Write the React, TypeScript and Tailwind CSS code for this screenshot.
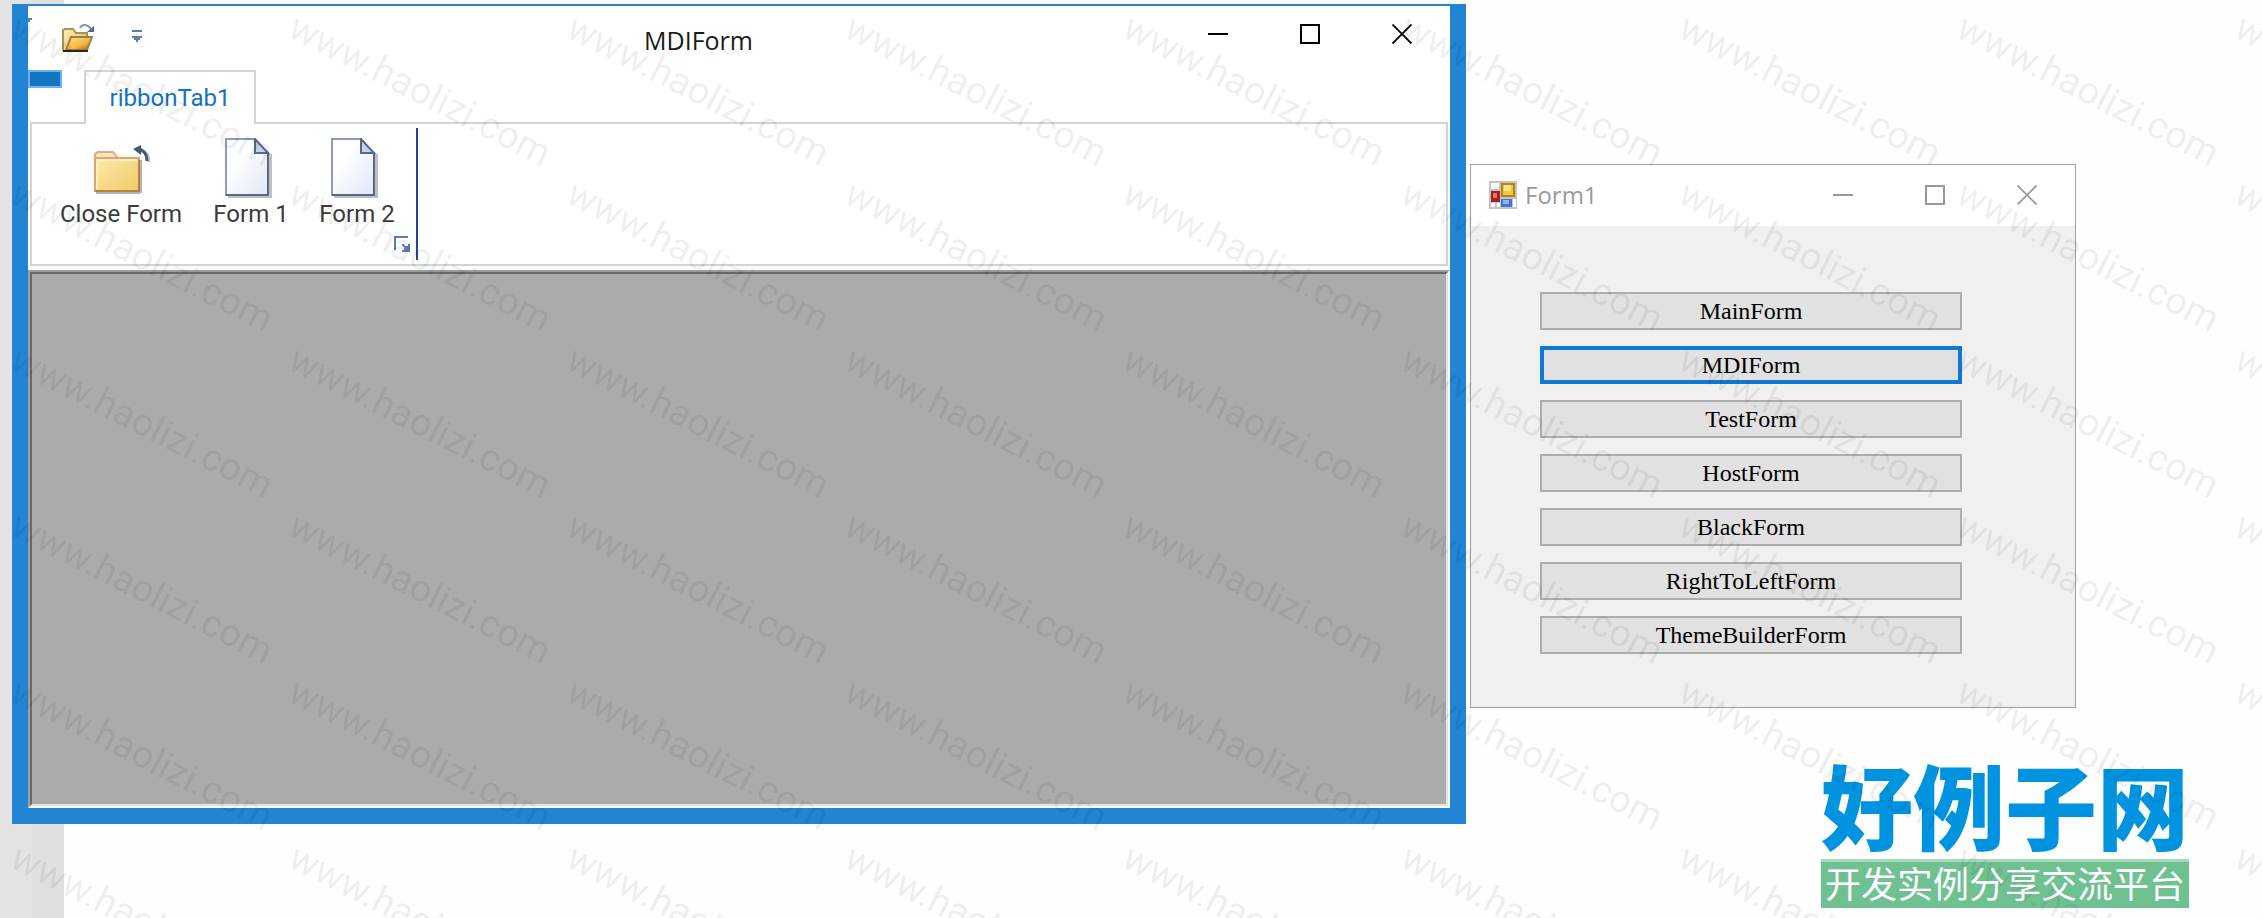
import React from 'react';

const FORMS = [
  'MainForm',
  'MDIForm',
  'TestForm',
  'HostForm',
  'BlackForm',
  'RightToLeftForm',
  'ThemeBuilderForm',
];

const WATERMARKS = Array.from({ length: 54 }, (_, i) => i);

const OpenFolderIcon: React.FC = () => (
  <svg width="32" height="30" viewBox="0 0 32 30" aria-hidden="true">
    <defs>
      <linearGradient id="openBack" x1="0" y1="0" x2="1" y2="1">
        <stop offset="0" stopColor="#fff3b8" />
        <stop offset="1" stopColor="#e8b64a" />
      </linearGradient>
      <linearGradient id="openFront" x1="0" y1="0" x2="1" y2="1">
        <stop offset="0" stopColor="#ffe08a" />
        <stop offset="0.6" stopColor="#f8b53a" />
        <stop offset="1" stopColor="#8a5a10" />
      </linearGradient>
    </defs>
    <path d="M1 28V7l2-1h8l3 4h11v5" fill="url(#openBack)" stroke="#a8905c" strokeWidth="2" />
    <path d="M4 27l5-13h21l-5 13z" fill="url(#openFront)" stroke="#96824e" strokeWidth="2" />
    <path d="M1 28h25" stroke="#33230a" strokeWidth="2" />
    <path d="M18 5c2-4 8-4 11 1" fill="none" stroke="#8095b8" strokeWidth="2" />
    <path d="M32 3v6h-7z" fill="#4d6a99" />
  </svg>
);

const CloseFolderIcon: React.FC = () => (
  <svg width="58" height="50" viewBox="0 0 58 50" aria-hidden="true">
    <defs>
      <linearGradient id="folder" x1="0" y1="0" x2="1" y2="1">
        <stop offset="0" stopColor="#fde9a8" />
        <stop offset="1" stopColor="#edcb6c" />
      </linearGradient>
    </defs>
    <path d="M4 47h44v2H4zM48 15h2v33h-2z" fill="#000" opacity="0.3" />
    <path d="M3 14V9l3-2h15l4 5v2z" fill="#fde3bc" stroke="#dfae7a" strokeWidth="2" />
    <path d="M3 13h44v33H3z" fill="url(#folder)" stroke="#dba873" strokeWidth="2" />
    <path d="M47 15v31H3" fill="none" stroke="#b98045" strokeWidth="2" />
    <path d="M5 44V15h40" fill="none" stroke="#fff0c0" strokeWidth="2" />
    <path d="M48 5c6 1 9 6 9 12" fill="none" stroke="#bbb" strokeWidth="3" />
    <path d="M46 4c6 1 9 6 9 12" fill="none" stroke="#46566f" strokeWidth="3" />
    <path d="M41 4l8-4v10z" fill="#46566f" />
  </svg>
);

const DocumentIcon: React.FC<{ id: string }> = ({ id }) => (
  <svg width="52" height="60" viewBox="0 0 52 60" aria-hidden="true">
    <defs>
      <linearGradient id={id} x1="0" y1="0" x2="1" y2="1">
        <stop offset="0.3" stopColor="#fff" />
        <stop offset="1" stopColor="#dfe7f6" />
      </linearGradient>
    </defs>
    <path d="M3 58h44v2H3zM44 16h3v43h-3z" fill="#000" opacity="0.25" />
    <path d="M1 1h29l13 14v42H1z" fill={`url(#${id})`} />
    <path d="M1 58V1h29" fill="none" stroke="#8c9cb8" strokeWidth="2" />
    <path d="M43 14v43H1" fill="none" stroke="#566a87" strokeWidth="2" />
    <path d="M30 1v14h13z" fill="#c5d3ea" stroke="#566a87" strokeWidth="2" />
  </svg>
);

const FormIcon: React.FC = () => (
  <svg width="28" height="28" viewBox="0 0 28 28" aria-hidden="true">
    <rect width="28" height="28" fill="#c4c4c4" />
    <path d="M2 2h8v6H2zM2 22h4v4H2zM8 22h3v4H8zM24 18h3v8h-3z" fill="#fff" />
    <rect x="12" y="2" width="14" height="14" fill="#b5830f" />
    <rect x="14" y="4" width="10" height="10" fill="#f7c43a" />
    <rect x="15" y="4" width="7" height="6" fill="#fde38b" />
    <rect x="2" y="10" width="9" height="11" fill="#a51f1b" />
    <rect x="4" y="12" width="4" height="5" fill="#e2766c" />
    <rect x="12" y="18" width="11" height="8" fill="#3f74d8" />
    <rect x="14" y="19" width="6" height="4" fill="#8bb2f2" />
  </svg>
);

const MinimizeIcon: React.FC = () => (
  <svg width="20" height="20" viewBox="0 0 20 20" aria-hidden="true">
    <path d="M0 10h20" stroke="currentColor" strokeWidth="2" />
  </svg>
);

const MaximizeIcon: React.FC = () => (
  <svg width="20" height="20" viewBox="0 0 20 20" aria-hidden="true">
    <path d="M1 1h18v18H1z" fill="none" stroke="currentColor" strokeWidth="2" />
  </svg>
);

const CloseIcon: React.FC = () => (
  <svg width="20" height="20" viewBox="0 0 20 20" aria-hidden="true">
    <path d="M0.5 0.5l19 19M19.5 0.5l-19 19" stroke="currentColor" strokeWidth="1.8" />
  </svg>
);

const WindowControls: React.FC = () => (
  <div className="flex h-full">
    <button aria-label="Minimize" className="flex w-[92px] items-center justify-center">
      <MinimizeIcon />
    </button>
    <button aria-label="Maximize" className="flex w-[92px] items-center justify-center">
      <MaximizeIcon />
    </button>
    <button aria-label="Close" className="flex w-[92px] items-center justify-center">
      <CloseIcon />
    </button>
  </div>
);

const Ribbon: React.FC = () => (
  <div className="font-[Roboto,sans-serif] text-2xl">
    <div className="flex h-[52px] items-start">
      <button
        aria-label="Application menu"
        className="h-[18px] w-[34px] border-2 border-[#6fb1e2] bg-[#1274c4]"
      />
      <button className="relative ml-[22px] h-[54px] w-[172px] border-2 border-b-0 border-[#d3d3d3] bg-white text-[#1274c4]">
        ribbonTab1
      </button>
    </div>
    <div className="mx-0.5 flex h-36 border-2 border-[#d3d3d3] bg-white pl-7 text-[#3c3c3c]">
      <div className="flex gap-8 pt-3.5 leading-6">
        <button className="flex w-[122px] flex-col items-center whitespace-nowrap">
          <span className="flex h-16 items-center">
            <CloseFolderIcon />
          </span>
          Close Form
        </button>
        <button className="flex w-[74px] flex-col items-center whitespace-nowrap">
          <span className="flex h-16 items-start">
            <DocumentIcon id="doc1" />
          </span>
          Form 1
        </button>
        <button className="flex w-[74px] flex-col items-center whitespace-nowrap">
          <span className="flex h-16 items-start">
            <DocumentIcon id="doc2" />
          </span>
          Form 2
        </button>
      </div>
      <button aria-label="More options" className="mb-3 self-end">
        <svg width="16" height="16" viewBox="0 0 16 16" aria-hidden="true">
          <path d="M1 14V1h13" fill="none" stroke="#5b7fb5" strokeWidth="2" />
          <path d="M16 8v8H8v-2h2v-2h2v-2h2V8zM8 8h2v2H8z" fill="#5b7fb5" />
          <path d="M9 9l5 5" stroke="#5b7fb5" strokeWidth="2" />
        </svg>
      </button>
      <div className="my-1 ml-1.5 w-0.5 bg-[#1c4595]" />
    </div>
  </div>
);

const MdiWindow: React.FC = () => (
  <section className="mt-1 mb-[94px] ml-3 flex min-w-0 flex-1 flex-col border-16 border-t-2 border-[#2185d3] bg-white">
    <header className="flex h-16 items-start pt-1">
      <div className="flex h-14 w-[197px] items-center">
        <svg width="4" height="4" viewBox="0 0 4 4" className="mt-2 self-start" aria-hidden="true">
          <path d="M0 0h4v2H2v2H0z" fill="#5b7fb5" />
        </svg>
        <button aria-label="Open" className="ml-[30px]">
          <OpenFolderIcon />
        </button>
        <button aria-label="Customize toolbar" className="ml-[38px]">
          <svg width="10" height="16" viewBox="0 0 10 16" aria-hidden="true">
            <path d="M0 0h10v2H0zM0 6h10v2H8v2H6v2H4v-2H2V8H0z" fill="#5b7fb5" />
          </svg>
        </button>
      </div>
      <h1 className="flex-1 text-center font-['Open_Sans',sans-serif] text-[25px] leading-[60px] text-[#1a1a1a]">
        MDIForm
      </h1>
      <div className="h-12 pr-0.5 text-black">
        <WindowControls />
      </div>
    </header>
    <Ribbon />
    <div className="mt-1 flex flex-1 border-2 border-t-[#9c9c9c] border-r-white border-b-white border-l-[#a0a0a0]">
      <div className="flex-1 border-2 border-t-[#696969] border-r-[#e3e3e3] border-b-[#e3e3e3] border-l-[#696969] bg-[#ababab]" />
    </div>
  </section>
);

const LauncherWindow: React.FC = () => (
  <section className="w-[606px] border border-[#a0a0a0] bg-[#f0f0f0]">
    <header className="flex h-[61px] items-center bg-white pb-0.5 pl-[18px] text-[#999999]">
      <FormIcon />
      <h2 className="ml-2 flex-1 font-['Open_Sans',sans-serif] text-2xl">Form1</h2>
      <div className="h-full pr-[2px]">
        <WindowControls />
      </div>
    </header>
    <div className="flex flex-col gap-4 pt-[66px] pr-[113px] pb-[53px] pl-[69px]">
      {FORMS.map((name) => (
        <button
          key={name}
          className={`flex h-[38px] items-center justify-center bg-[#e1e1e1] font-['Liberation_Serif',serif] text-2xl leading-6 text-black ${
            name === 'MDIForm' ? 'border-4 border-[#0f78d7]' : 'border-2 border-[#adadad]'
          }`}
        >
          {name}
        </button>
      ))}
    </div>
  </section>
);

const SiteLogo: React.FC = () => (
  <div className="mt-auto mr-[73px] mb-[10px] w-[368px] self-end font-['Noto_Sans_CJK_SC',sans-serif]">
    <p className="flex justify-center text-[92px] leading-[92px] font-black whitespace-nowrap text-[#0093e0]">
      好例子网
    </p>
    <p className="mt-2.5 flex justify-center border-t-3 border-[#a9d9bd] bg-[#70c192] pb-1.5 text-4xl leading-10 whitespace-nowrap text-white">
      开发实例分享交流平台
    </p>
  </div>
);

const Watermark: React.FC = () => (
  <div
    aria-hidden="true"
    className="pointer-events-none absolute inset-0 grid auto-rows-[166px] grid-cols-[repeat(9,278px)] overflow-hidden font-[Roboto,sans-serif] text-[38px] leading-[38px] text-black/7"
  >
    {WATERMARKS.map((i) => (
      <div key={i} className="pt-1 pl-2">
        <div className="origin-[0_32px] rotate-27">www.haolizi.com</div>
      </div>
    ))}
  </div>
);

export default function App() {
  return (
    <main className="relative flex min-h-screen overflow-hidden bg-[linear-gradient(to_right,#e3e3e3_32px,#dfdfdf_32px,#dfdfdf_64px,#fefefe_64px)]">
      <MdiWindow />
      <div className="flex w-[796px] flex-col pt-[164px] pl-1">
        <LauncherWindow />
        <SiteLogo />
      </div>
      <Watermark />
    </main>
  );
}
